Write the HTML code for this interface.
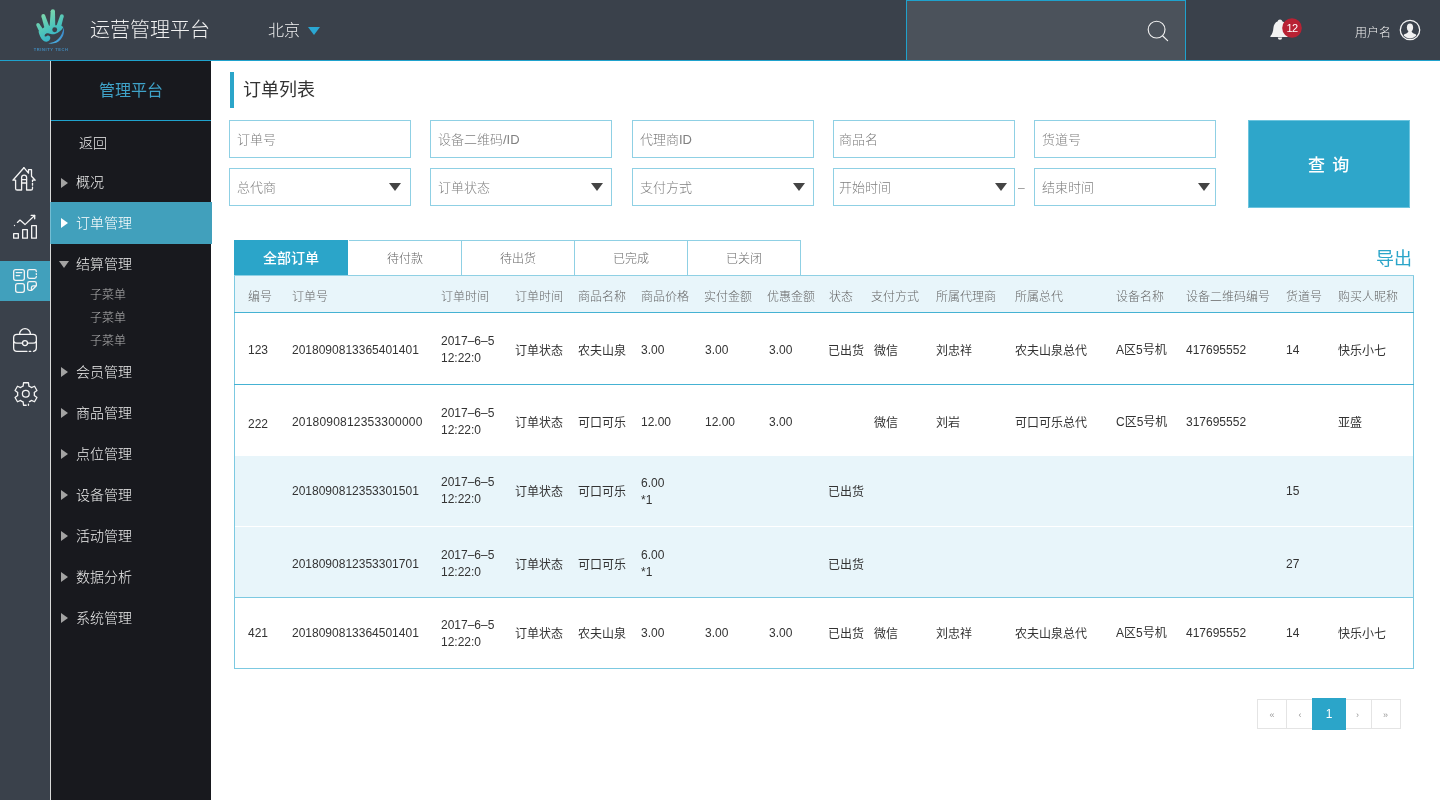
<!DOCTYPE html>
<html lang="zh-CN"><head><meta charset="utf-8"><title>运营管理平台</title>
<style>
*{box-sizing:border-box;margin:0;padding:0}
html,body{width:1440px;height:800px;overflow:hidden;background:#fff}
body{font-family:"Liberation Sans", "Noto Sans CJK SC", sans-serif;font-size:12px;color:#333;position:relative}
ul,li{list-style:none}
a{color:inherit;text-decoration:none}
h1,h2{font-size:inherit;font-weight:normal}
table,thead,tbody,tr{display:block;border:0;border-collapse:collapse}
.abs,.t{position:absolute}
.t{white-space:nowrap;line-height:20px;height:20px}
#app{position:absolute;left:0;top:0;width:1440px;height:800px;will-change:transform}
#hdr{position:absolute;left:0;top:0;width:1440px;height:60px;background:#3a414b}
#hline{position:absolute;left:0;top:60px;width:1440px;height:1px;background:#1fa2cd}
#rail{position:absolute;left:0;top:61px;width:50px;height:739px;background:#3a414b}
#vline{position:absolute;left:50px;top:61px;width:1px;height:739px;background:#d9d9d9}
#panel{position:absolute;left:51px;top:61px;width:160px;height:739px;background:#18191e}
.mi{color:#ededed;font-size:14px;font-weight:300}
.sub{color:#b5b5b5;font-size:12px;font-weight:300}
.tri-r{position:absolute;width:0;height:0;border-left:7px solid #a3a3a3;border-top:5px solid transparent;border-bottom:5px solid transparent}
.tri-d{position:absolute;width:0;height:0;border-top:7px solid #a3a3a3;border-left:5px solid transparent;border-right:5px solid transparent}
.inp{position:absolute;width:182px;height:38px;border:1px solid #8fd0e4;background:#fff;border-radius:0;outline:none}
input.inp{font-family:"Liberation Sans", "Noto Sans CJK SC", sans-serif;font-size:13px;font-weight:300;color:#333;padding:0px 0 0 7px}
input.inp::placeholder{color:#808080;opacity:1}
.ph{color:#808080;font-size:13px;font-weight:300}
.sel-tri{position:absolute;width:0;height:0;border-top:8px solid #444;border-left:6px solid transparent;border-right:6px solid transparent}
.tab{position:absolute;top:240px;height:36px;border:1px solid #8fd0e4;border-left:none;background:#fff;color:#666;font-size:12px;font-weight:300;text-align:center;line-height:37px}
.th{color:#666;font-size:12px;font-weight:300;text-align:left}
.td{color:#333;font-size:12px;font-weight:normal;text-align:left}
.pgt{color:#999;font-size:9px}
#qbtn{position:absolute;left:1248px;top:120px;width:162px;height:88px;background:#2ea6ca;border:1px solid #6cc4de;border-radius:0;font-family:"Liberation Sans", "Noto Sans CJK SC", sans-serif;cursor:pointer}
</style></head>
<body>
<div id="app">
<header>
<div id="hdr"></div><div id="hline"></div>
<svg class="abs" style="left:0;top:0" width="110" height="60" viewBox="0 0 110 60">
<defs><linearGradient id="lg" gradientUnits="userSpaceOnUse" x1="40" y1="12" x2="58" y2="42"><stop offset="0" stop-color="#86dba9"/><stop offset="0.55" stop-color="#4cc3bb"/><stop offset="1" stop-color="#2aa9cf"/></linearGradient>
<linearGradient id="lg2" gradientUnits="userSpaceOnUse" x1="64" y1="28" x2="50" y2="44"><stop offset="0" stop-color="#3b86c9"/><stop offset="1" stop-color="#49b0e2"/></linearGradient></defs>
<path d="M50.70,11.24 L49.50,27.92 L55.30,28.08 L55.00,11.36 Z" fill="url(#lg)"/><circle cx="52.85" cy="11.30" r="2.15" fill="url(#lg)"/><path d="M41.44,16.60 L45.23,30.83 L50.37,29.17 L45.16,15.40 Z" fill="url(#lg)"/><circle cx="43.30" cy="16.00" r="1.95" fill="url(#lg)"/><path d="M60.13,15.47 L55.61,28.28 L60.39,29.72 L63.67,16.53 Z" fill="url(#lg)"/><circle cx="61.90" cy="16.00" r="1.85" fill="url(#lg)"/><path d="M36.48,25.66 L41.24,35.78 L45.76,33.22 L39.52,23.94 Z" fill="url(#lg)"/><circle cx="38.00" cy="24.80" r="1.75" fill="url(#lg)"/>
<path fill="url(#lg)" d="M41.9,28.9 L46,26 L60,25 L63.3,27 C62,30 59,32.6 55,33.9 C52.5,34.6 50.5,33.6 48.75,33.4 C47,33.2 45.6,33.7 45,34.4 C44.4,35.4 44.6,36.4 45.4,36.6 C46.2,36.7 46.8,36.2 47.2,35.8 C48.6,34.9 50.4,36.2 50.3,38 C50.2,39.8 48.8,41.4 46.5,41.7 C43.6,42 41.6,39.6 40.2,36.6 C39.4,34.8 38.9,33.2 38.5,31.6 Z"/>
<circle cx="54.7" cy="29.7" r="2.45" fill="#3a414b"/>
<path fill="url(#lg2)" d="M63.75,27.4 C64.6,31.4 64,35.6 60.4,39.8 C57.4,43.2 52.6,44.3 48.2,43.3 C52,43.2 55.6,41.6 58.1,39.1 C61,36.2 62.8,32 63.75,27.4 Z"/>
<text x="33.8" y="50.6" font-family="'Liberation Sans', sans-serif" font-size="4" font-weight="bold" fill="#4189ba" letter-spacing="0.6">TRINITY TECH</text>
</svg>
<h1 class="t " style="left:90px;top:20px;font-size:20px;font-weight:300;color:#f0f0f0;line-height:30px;height:30px;margin-top:-5px">运营管理平台</h1>
<span class="t " style="left:268px;top:21px;font-size:16px;font-weight:300;color:#f0f0f0">北京</span>
<div class="abs" style="left:308px;top:27px;width:0;height:0;border-top:8px solid #2aa7d3;border-left:6.5px solid transparent;border-right:6.5px solid transparent"></div>
<div class="abs" style="left:906px;top:0;width:280px;height:60px;background:#4b525b;border:1px solid #1fa2cd;border-bottom:none"></div>
<svg class="abs" style="left:1140px;top:0" width="300" height="60" viewBox="1140 0 300 60">
<circle cx="1156.6" cy="29.6" r="8.4" fill="none" stroke="#f0f0f0" stroke-width="1.15"/>
<path d="M1162.8,36 L1167.6,40.6" stroke="#f0f0f0" stroke-width="1.2" stroke-linecap="round"/>
<path fill="#f2f2f2" d="M1280,19.6 C1281.3,19.6 1282,20.5 1282.2,21.3 C1285,22.4 1286.3,25 1286.6,28 C1286.9,31.5 1287.6,34 1289.6,36 L1289.6,37 L1270.4,37 L1270.4,36 C1272.4,34 1273.1,31.5 1273.4,28 C1273.7,25 1275,22.4 1277.8,21.3 C1278,20.5 1278.7,19.6 1280,19.6 Z"/>
<path fill="#f2f2f2" d="M1277.8,37.6 L1282.2,37.6 A2.2,2.2 0 0 1 1277.8,37.6 Z"/>
<circle cx="1292" cy="28" r="9.8" fill="#b82234"/>
<text x="1292" y="32" text-anchor="middle" font-family="'Liberation Sans', sans-serif" font-size="11" fill="#fff" letter-spacing="-0.5">12</text>
<circle cx="1410" cy="30" r="9.7" fill="none" stroke="#f4f4f4" stroke-width="1.3"/>
<clipPath id="av"><circle cx="1410" cy="30" r="8.4"/></clipPath>
<g clip-path="url(#av)" fill="#f0f0f0"><ellipse cx="1410" cy="27.6" rx="3.1" ry="4"/><path d="M1408.6,30.5 L1411.4,30.5 C1411.6,32.6 1413,33.2 1415,34 C1416.6,34.7 1417.2,36 1417.4,40 L1402.6,40 C1402.8,36 1403.4,34.7 1405,34 C1407,33.2 1408.4,32.6 1408.6,30.5 Z"/></g>
</svg>
<span class="t " style="left:1355px;top:23px;font-size:12px;font-weight:300;color:#f0f0f0">用户名</span>
</header>
<aside>
<div id="rail"></div>
<div class="abs" style="left:0;top:261px;width:50px;height:40px;background:#41a0bc"></div>
<svg class="abs" style="left:0;top:160px" width="50" height="260" viewBox="0 160 50 260"><g fill="none" stroke="#f4f4f4" stroke-width="1.3" stroke-linecap="round" stroke-linejoin="round">
<path d="M23.9,167.7 L12.9,180.2 H15.6 V188.4 Q15.6,190 17.2,190 H21.6 V177.6 A2.5,2.4 0 0 1 26.6,177.6 V190 H30.9 Q32.5,190 32.5,188.4 V187.2"/>
<path d="M32.5,185.2 V183.4"/>
<path d="M32.5,181.6 V180.2 H35.2 L31.5,176.2 V169.7 H28.5 V173.2 L23.9,167.7"/>
<path d="M21.6,179.7 H26.6 M21.6,183 H26.6"/>
</g><g fill="none" stroke="#f4f4f4" stroke-width="1.3" stroke-linecap="round" stroke-linejoin="round" stroke-linejoin="miter">
<rect x="13.65" y="233.65" width="4.7" height="4.5"/>
<rect x="22.65" y="229.65" width="4.7" height="8.5"/>
<rect x="31.65" y="225.65" width="4.7" height="12.5"/>
<path d="M17.4,222.4 L20,220.1 L25,224.6 L34.6,215.5"/>
<path d="M31.2,215.4 H34.7 V218.8"/>
<path d="M14.5,225.5 L14.5,225.6"/>
</g><g fill="none" stroke="#f4f4f4" stroke-width="1.3" stroke-linecap="round" stroke-linejoin="round">
<rect x="13.65" y="269.65" width="10.7" height="10.7" rx="2"/>
<path d="M16.2,272.6 H21.8 M16.2,275.6 H19.8"/>
<path d="M36.35,271.6 V271.4 Q36.35,269.65 34.6,269.65 H29.4 Q27.65,269.65 27.65,271.4 V276.6 Q27.65,278.35 29.4,278.35 H34.6 Q36.35,278.35 36.35,276.6 V276.4"/>
<path d="M36.35,273.6 V274.4"/>
<rect x="15.65" y="283.65" width="8.7" height="8.7" rx="2"/>
<path d="M31.8,290.35 H29.4 Q27.65,290.35 27.65,288.6 V283.4 Q27.65,281.65 29.4,281.65 H34.6 Q36.35,281.65 36.35,283.4 V285.8 L31.8,290.35 Q31.2,288.6 31.5,287.2 Q31.8,286 33.2,285.9 L36.2,285.8"/>
</g><g fill="none" stroke="#f4f4f4" stroke-width="1.3" stroke-linecap="round" stroke-linejoin="round">
<path d="M27,351.35 H16.9 Q13.65,351.35 13.65,348.1 V337.65 Q13.65,334.4 16.9,334.4 H33.1 Q36.35,334.4 36.35,337.65 V348.1 Q36.35,351 33.4,351.3"/>
<path d="M29.2,351.35 H30.8"/>
<path d="M19.6,334.2 A5.4,5.6 0 0 1 30.4,334.2"/>
<path d="M13.8,341.6 Q14.6,343.2 17,343.2 H22.4 M27.6,343.2 H33 Q35.4,343.2 36.2,341.6"/>
<circle cx="25" cy="343.1" r="2.5"/>
</g><g fill="none" stroke="#f4f4f4" stroke-width="1.3" stroke-linecap="round" stroke-linejoin="round">
<path d="M26.20,405.24 L23.55,405.24 L23.10,401.88 A8.4,8.4 0 0 1 20.62,400.45 L17.49,401.74 L15.04,397.50 L17.72,395.43 A8.4,8.4 0 0 1 17.72,392.57 L15.04,390.50 L17.49,386.26 L20.62,387.55 A8.4,8.4 0 0 1 23.10,386.12 L23.55,382.76 L28.45,382.76 L28.90,386.12 A8.4,8.4 0 0 1 31.38,387.55 L34.51,386.26 L36.96,390.50 L34.28,392.57 A8.4,8.4 0 0 1 34.28,395.43 L36.96,397.50 L34.51,401.74 L31.38,400.45 A8.4,8.4 0 0 1 29.44,401.66"/>
<path d="M28.45,404.04 V405.24"/>
<circle cx="25.8" cy="393.8" r="3.4"/>
</g></svg>
</aside>
<nav>
<div id="panel"></div><div id="vline"></div>
<div class="abs" style="left:51px;top:120px;width:160px;height:1px;background:#1fa2cd"></div>
<h2 class="t " style="left:99px;top:81px;font-size:16px;color:#3fa3c9">管理平台</h2>
<a class="t mi" style="left:79px;top:133px;">返回</a>
<div class="abs" style="left:51px;top:202px;width:161px;height:42px;background:#41a0bc"></div><div class="abs" style="left:50px;top:202px;width:1px;height:42px;background:#74bdd3"></div>
<ul>
<li>
<i class="tri-r" style="left:61px;top:178px"></i>
<a class="t mi" style="left:76px;top:172px;">概况</a>
</li>
<li>
<i class="tri-r" style="left:61px;top:218px;border-left-color:#fff"></i>
<a class="t mi" style="left:76px;top:213px;color:#fff">订单管理</a>
</li>
<li>
<i class="tri-d" style="left:59px;top:261px"></i>
<a class="t mi" style="left:76px;top:254px;">结算管理</a>
<ul>
<li>
<a class="t sub" style="left:90px;top:285px;">子菜单</a>
</li>
<li>
<a class="t sub" style="left:90px;top:308px;">子菜单</a>
</li>
<li>
<a class="t sub" style="left:90px;top:331px;">子菜单</a>
</li>
</ul>
</li>
<li>
<i class="tri-r" style="left:61px;top:367px"></i>
<a class="t mi" style="left:76px;top:362px;">会员管理</a>
</li>
<li>
<i class="tri-r" style="left:61px;top:408px"></i>
<a class="t mi" style="left:76px;top:403px;">商品管理</a>
</li>
<li>
<i class="tri-r" style="left:61px;top:449px"></i>
<a class="t mi" style="left:76px;top:444px;">点位管理</a>
</li>
<li>
<i class="tri-r" style="left:61px;top:490px"></i>
<a class="t mi" style="left:76px;top:485px;">设备管理</a>
</li>
<li>
<i class="tri-r" style="left:61px;top:531px"></i>
<a class="t mi" style="left:76px;top:526px;">活动管理</a>
</li>
<li>
<i class="tri-r" style="left:61px;top:572px"></i>
<a class="t mi" style="left:76px;top:567px;">数据分析</a>
</li>
<li>
<i class="tri-r" style="left:61px;top:613px"></i>
<a class="t mi" style="left:76px;top:608px;">系统管理</a>
</li>
</ul>
</nav>
<main>
<div class="abs" style="left:230px;top:72px;width:4px;height:36px;background:#2ba5c9"></div>
<h2 class="t " style="left:243px;top:80px;font-size:18px;color:#333;line-height:28px;height:28px;margin-top:-4px">订单列表</h2>
<form onsubmit="return false">
<input class="inp" type="text" placeholder="订单号" style="left:229px;top:120px;padding-left:7px">
<div class="inp" style="left:229px;top:168px"></div>
<span class="t ph" style="left:237px;top:178px;">总代商</span>
<i class="sel-tri" style="left:389px;top:183px"></i>
<input class="inp" type="text" placeholder="设备二维码/ID" style="left:430px;top:120px;padding-left:7px">
<div class="inp" style="left:430px;top:168px"></div>
<span class="t ph" style="left:438px;top:178px;">订单状态</span>
<i class="sel-tri" style="left:591px;top:183px"></i>
<input class="inp" type="text" placeholder="代理商ID" style="left:632px;top:120px;padding-left:7px">
<div class="inp" style="left:632px;top:168px"></div>
<span class="t ph" style="left:640px;top:178px;">支付方式</span>
<i class="sel-tri" style="left:793px;top:183px"></i>
<input class="inp" type="text" placeholder="商品名" style="left:833px;top:120px;padding-left:5px">
<div class="inp" style="left:833px;top:168px"></div>
<span class="t ph" style="left:839px;top:178px;">开始时间</span>
<i class="sel-tri" style="left:995px;top:183px"></i>
<input class="inp" type="text" placeholder="货道号" style="left:1034px;top:120px;padding-left:7px">
<div class="inp" style="left:1034px;top:168px"></div>
<span class="t ph" style="left:1042px;top:178px;">结束时间</span>
<i class="sel-tri" style="left:1198px;top:183px"></i>
<span class="t " style="left:1018px;top:178px;color:#999;font-size:12px">–</span>
<button id="qbtn" type="button"><span class="t" style="left:59px;top:31px;font-size:17px;word-spacing:2.5px;color:#fff;font-weight:500;line-height:28px;height:28px">查 询</span></button>
</form>
<ul>
<li class="abs" style="left:234px;top:240px;width:114px;height:36px;background:#2ba5c9;color:#fff;font-size:14px;font-weight:500;text-align:center;line-height:37px">全部订单</li>
<li class="tab" style="left:349px;width:113px">待付款</li>
<li class="tab" style="left:462px;width:113px">待出货</li>
<li class="tab" style="left:575px;width:113px">已完成</li>
<li class="tab" style="left:688px;width:113px">已关闭</li>
</ul>
<a class="t " style="left:1376px;top:249px;font-size:18px;color:#2ba5c9;line-height:28px;height:28px;margin-top:-4px">导出</a>
<div class="abs" style="left:234px;top:276px;width:1180px;height:393px;border:1px solid #7cc9e1;border-top:none"></div>
<div class="abs" style="left:235px;top:276px;width:1178px;height:36px;background:#e8f5fa"></div>
<div class="abs" style="left:234px;top:275px;width:1180px;height:1px;background:#8fd0e4"></div>
<div class="abs" style="left:234px;top:312px;width:1180px;height:1px;background:#45b2d3"></div>
<div class="abs" style="left:234px;top:384px;width:1180px;height:1px;background:#45b2d3"></div>
<div class="abs" style="left:235px;top:456px;width:1178px;height:141px;background:#e8f5fa"></div>
<div class="abs" style="left:235px;top:526px;width:1178px;height:1px;background:#fff"></div>
<div class="abs" style="left:234px;top:597px;width:1180px;height:1px;background:#7cc9e1"></div>
<table><thead><tr>
<th class="t th" style="left:248px;top:287px;">编号</th>
<th class="t th" style="left:292px;top:287px;">订单号</th>
<th class="t th" style="left:441px;top:287px;">订单时间</th>
<th class="t th" style="left:515px;top:287px;">订单时间</th>
<th class="t th" style="left:578px;top:287px;">商品名称</th>
<th class="t th" style="left:641px;top:287px;">商品价格</th>
<th class="t th" style="left:704px;top:287px;">实付金额</th>
<th class="t th" style="left:767px;top:287px;">优惠金额</th>
<th class="t th" style="left:829px;top:287px;">状态</th>
<th class="t th" style="left:871px;top:287px;">支付方式</th>
<th class="t th" style="left:936px;top:287px;">所属代理商</th>
<th class="t th" style="left:1015px;top:287px;">所属总代</th>
<th class="t th" style="left:1116px;top:287px;">设备名称</th>
<th class="t th" style="left:1186px;top:287px;">设备二维码编号</th>
<th class="t th" style="left:1286px;top:287px;">货道号</th>
<th class="t th" style="left:1338px;top:287px;">购买人昵称</th>
</tr></thead><tbody>
<tr>
<td class="t td" style="left:248px;top:340px;">123</td>
<td class="t td" style="left:292px;top:340px;">2018090813365401401</td>
<td class="t td" style="left:441px;top:331px;height:37px"><span class="t" style="left:0;top:0">2017–6–5</span><span class="t" style="left:0;top:17px">12:22:0</span></td>
<td class="t td" style="left:515px;top:341px;">订单状态</td>
<td class="t td" style="left:578px;top:341px;">农夫山泉</td>
<td class="t td" style="left:641px;top:340px;">3.00</td>
<td class="t td" style="left:705px;top:340px;">3.00</td>
<td class="t td" style="left:769px;top:340px;">3.00</td>
<td class="t td" style="left:828px;top:341px;">已出货</td>
<td class="t td" style="left:874px;top:341px;">微信</td>
<td class="t td" style="left:936px;top:341px;">刘忠祥</td>
<td class="t td" style="left:1015px;top:341px;">农夫山泉总代</td>
<td class="t td" style="left:1116px;top:340px;">A区5号机</td>
<td class="t td" style="left:1186px;top:340px;">417695552</td>
<td class="t td" style="left:1286px;top:340px;">14</td>
<td class="t td" style="left:1338px;top:341px;">快乐小七</td>
</tr>
<tr>
<td class="t td" style="left:248px;top:414px;">222</td>
<td class="t td" style="left:292px;top:412px;letter-spacing:0.2px">2018090812353300000</td>
<td class="t td" style="left:441px;top:403px;height:37px"><span class="t" style="left:0;top:0">2017–6–5</span><span class="t" style="left:0;top:17px">12:22:0</span></td>
<td class="t td" style="left:515px;top:413px;">订单状态</td>
<td class="t td" style="left:578px;top:413px;">可口可乐</td>
<td class="t td" style="left:641px;top:412px;">12.00</td>
<td class="t td" style="left:705px;top:412px;">12.00</td>
<td class="t td" style="left:769px;top:412px;">3.00</td>
<td></td>
<td class="t td" style="left:874px;top:413px;">微信</td>
<td class="t td" style="left:936px;top:413px;">刘岩</td>
<td class="t td" style="left:1015px;top:413px;">可口可乐总代</td>
<td class="t td" style="left:1116px;top:412px;">C区5号机</td>
<td class="t td" style="left:1186px;top:412px;">317695552</td>
<td></td>
<td class="t td" style="left:1338px;top:413px;">亚盛</td>
</tr>
<tr>
<td></td>
<td class="t td" style="left:292px;top:481px;">2018090812353301501</td>
<td class="t td" style="left:441px;top:472px;height:37px"><span class="t" style="left:0;top:0">2017–6–5</span><span class="t" style="left:0;top:17px">12:22:0</span></td>
<td class="t td" style="left:515px;top:482px;">订单状态</td>
<td class="t td" style="left:578px;top:482px;">可口可乐</td>
<td class="t td" style="left:641px;top:473px;height:37px"><span class="t" style="left:0;top:0">6.00</span><span class="t" style="left:0;top:17px">*1</span></td>
<td></td>
<td></td>
<td class="t td" style="left:828px;top:482px;">已出货</td>
<td></td>
<td></td>
<td></td>
<td></td>
<td></td>
<td class="t td" style="left:1286px;top:481px;">15</td>
<td></td>
</tr>
<tr>
<td></td>
<td class="t td" style="left:292px;top:554px;">2018090812353301701</td>
<td class="t td" style="left:441px;top:545px;height:37px"><span class="t" style="left:0;top:0">2017–6–5</span><span class="t" style="left:0;top:17px">12:22:0</span></td>
<td class="t td" style="left:515px;top:555px;">订单状态</td>
<td class="t td" style="left:578px;top:555px;">可口可乐</td>
<td class="t td" style="left:641px;top:545px;height:37px"><span class="t" style="left:0;top:0">6.00</span><span class="t" style="left:0;top:17px">*1</span></td>
<td></td>
<td></td>
<td class="t td" style="left:828px;top:555px;">已出货</td>
<td></td>
<td></td>
<td></td>
<td></td>
<td></td>
<td class="t td" style="left:1286px;top:554px;">27</td>
<td></td>
</tr>
<tr>
<td class="t td" style="left:248px;top:623px;">421</td>
<td class="t td" style="left:292px;top:623px;">2018090813364501401</td>
<td class="t td" style="left:441px;top:615px;height:37px"><span class="t" style="left:0;top:0">2017–6–5</span><span class="t" style="left:0;top:17px">12:22:0</span></td>
<td class="t td" style="left:515px;top:624px;">订单状态</td>
<td class="t td" style="left:578px;top:624px;">农夫山泉</td>
<td class="t td" style="left:641px;top:623px;">3.00</td>
<td class="t td" style="left:705px;top:623px;">3.00</td>
<td class="t td" style="left:769px;top:623px;">3.00</td>
<td class="t td" style="left:828px;top:624px;">已出货</td>
<td class="t td" style="left:874px;top:624px;">微信</td>
<td class="t td" style="left:936px;top:624px;">刘忠祥</td>
<td class="t td" style="left:1015px;top:624px;">农夫山泉总代</td>
<td class="t td" style="left:1116px;top:623px;">A区5号机</td>
<td class="t td" style="left:1186px;top:623px;">417695552</td>
<td class="t td" style="left:1286px;top:623px;">14</td>
<td class="t td" style="left:1338px;top:624px;">快乐小七</td>
</tr>
</tbody></table>
<nav>
<div class="abs" style="left:1257px;top:699px;width:144px;height:30px;border:1px solid #e4e4e4;background:#fff"></div>
<div class="abs" style="left:1286px;top:699px;width:1px;height:30px;background:#e4e4e4"></div>
<div class="abs" style="left:1371px;top:699px;width:1px;height:30px;background:#e4e4e4"></div>
<div class="abs" style="left:1312px;top:698px;width:34px;height:32px;background:#2ba5c9"></div>
<a class="t pgt" style="left:1262px;top:705px;width:20px;text-align:center">«</a>
<a class="t pgt" style="left:1290px;top:705px;width:20px;text-align:center">‹</a>
<a class="t pgt" style="left:1347.5px;top:705px;width:20px;text-align:center">›</a>
<a class="t pgt" style="left:1375.5px;top:705px;width:20px;text-align:center">»</a>
<a class="t" style="left:1319px;top:704px;width:20px;text-align:center;color:#fff;font-size:12px">1</a>
</nav>
</main>
</div>
</body></html>
